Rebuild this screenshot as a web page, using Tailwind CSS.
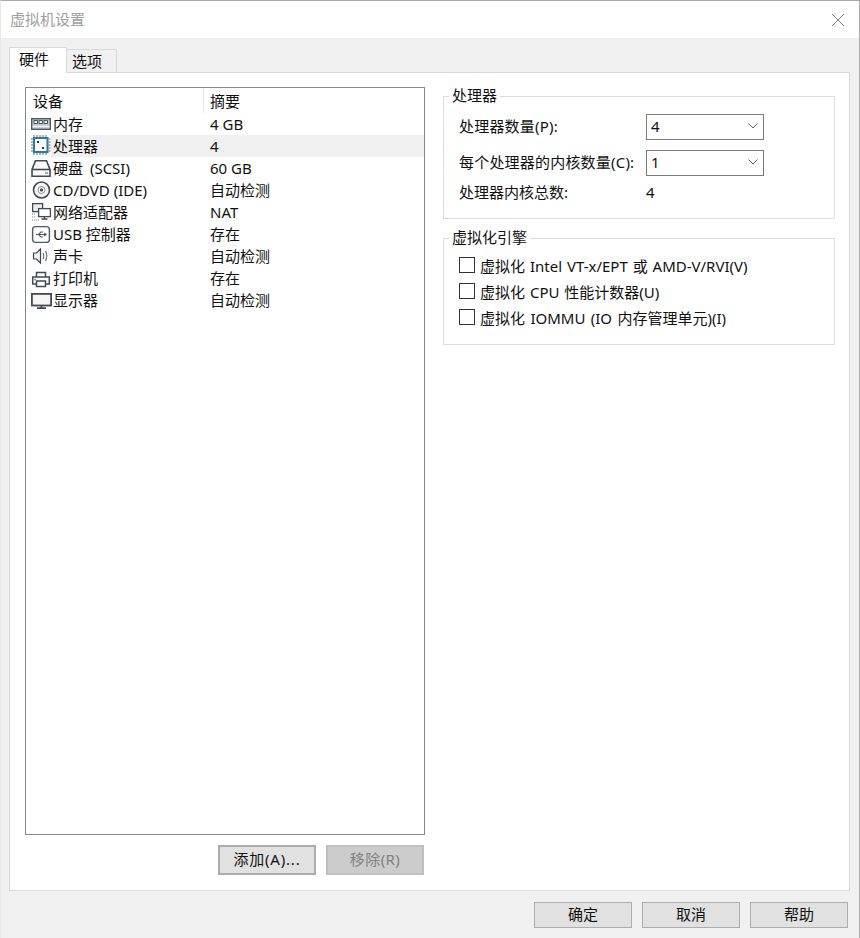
<!DOCTYPE html>
<html lang="zh-CN">
<head>
    <meta charset="UTF-8">
    <title>虚拟机设置</title>
    <script src="https://cdn.jsdelivr.net/npm/@tailwindcss/browser@4"></script>
</head>
<body class="bg-white">
<div class="w-[860px] h-[938px] flex flex-col bg-[#f0f0f0] text-[15px] leading-[22px] text-[#111] border-t border-r border-l border-[#a8a8a8] border-l-[#e8e8e8] overflow-hidden font-['Noto_Sans','Noto_Sans_CJK_SC',sans-serif]">

    <!-- Title bar -->
    <div class="h-[37px] shrink-0 bg-white flex items-center justify-between pl-[9px] pr-[15px]">
        <span class="text-[#a0a0a0] pb-[2px]">虚拟机设置</span>
        <svg class="w-[12px] h-[12px]" viewBox="0 0 12 12" fill="none" stroke="#808080" stroke-width="1"><path d="M0 0l12 12M12 0L0 12"/></svg>
    </div>

    <!-- Tabs -->
    <div class="h-[34px] shrink-0 flex items-end pl-[8px] pt-[9px]">
        <div class="w-[58px] h-[26px] bg-white border border-b-0 border-[#d9d9d9] pl-[9px] -mb-px relative z-10">硬件</div>
        <div class="w-[50px] h-[23px] bg-[#f0f0f0] border border-l-0 border-b-0 border-[#d9d9d9] pl-[5px]">选项</div>
    </div>

    <!-- Panel -->
    <div class="w-[841px] h-[819px] shrink-0 ml-[8px] bg-white border border-[#d9d9d9] flex pl-[15px] pt-[14px]">
        <div class="w-[400px] shrink-0 flex flex-col">
            <!-- Device list -->
            <div class="h-[748px] border border-[#828790] bg-white">
                <div class="flex h-[25px]">
                    <div class="w-[178px] pl-[7px] pt-[2px] border-r border-[#e5e5e5]">设备</div>
                    <div class="pl-[6px] pt-[2px]">摘要</div>
                </div>
                <div class="flex h-[22px] items-center pl-[5px] pb-[1px]">
                    <svg class="w-[22px] h-[22px] self-start shrink-0" viewBox="0 0 22 22" fill="none" stroke="#474f58" stroke-width="1.300"><rect x="0.700" y="5.700" width="18.600" height="10.600" fill="#c4c9ce"/><path d="M3 7.500h3.500v3H3zM8 7.500h3.500v3H8zM13 7.500h3.500v3H13z" fill="#f4f6f8" stroke-width="1"/><path d="M1.500 13.500h17" stroke="#f4f6f8"/></svg>
                    <span class="w-[157px]">内存</span><span>4 GB</span>
                </div>
                <div class="flex h-[22px] items-center pl-[5px]">
                    <svg class="w-[20px] h-[22px] self-start shrink-0" viewBox="0 0 20 22" fill="none"><rect x="3" y="3" width="13.500" height="14" fill="#fff" stroke="#2f78ab" stroke-width="2"/><path d="M3 0v2M6 0v2M9 0v2M12 0v2M15 0v2M3 18v2M6 18v2M9 18v2M12 18v2M15 18v2M0 4h2M0 7h2M0 10h2M0 13h2M0 16h2M17.500 4h2M17.500 7h2M17.500 10h2M17.500 13h2M17.500 16h2" stroke="#4f6f88"/><path d="M6 6h2v2H6zM11 12h2v2h-2z" fill="#2b3a48"/></svg>
                    <span class="flex-1 bg-[#f0f0f0] flex h-[22px] items-center pl-[2px] pb-[1px]"><span class="w-[157px]">处理器</span><span>4</span></span>
                </div>
                <div class="flex h-[22px] items-center pl-[5px] pb-[1px]">
                    <svg class="w-[22px] h-[22px] self-start shrink-0" viewBox="0 0 22 22" fill="none" stroke="#3f4a55" stroke-width="1.600"><path d="M4.500 3.800h11l3.500 8.700v6.700H1v-6.700z" fill="#fafafa"/><path d="M1 12.500h18"/><path d="M14 16h3" stroke="#8a949e"/></svg>
                    <span class="w-[157px] [word-spacing:3px]">硬盘 (SCSI)</span><span>60 GB</span>
                </div>
                <div class="flex h-[22px] items-center pl-[5px] pb-[1px]">
                    <svg class="w-[22px] h-[22px] self-start shrink-0" viewBox="0 0 22 22" fill="none" stroke="#3f4a55"><circle cx="10.500" cy="11" r="8" stroke-width="1.600" fill="#f5f5f5"/><circle cx="10.500" cy="11" r="3.500" stroke="#8a949e"/><circle cx="10.500" cy="11" r="1.200" fill="#4a5560"/></svg>
                    <span class="w-[157px]">CD/DVD (IDE)</span><span>自动检测</span>
                </div>
                <div class="flex h-[22px] items-center pl-[5px] pb-[1px]">
                    <svg class="w-[22px] h-[22px] self-start shrink-0" viewBox="0 0 22 22" fill="none" stroke="#3f4a55" stroke-width="1.300"><rect x="1.600" y="2.600" width="10" height="8" fill="#ececec"/><rect x="7.600" y="7.600" width="11.800" height="8" fill="#fff"/><path d="M13.500 15.500v2M10.500 18h6"/><path d="M1 13h1M3 13h1M1 16h1M3 16h1M1 19h8" stroke="#a0a8b0" stroke-dasharray="1 1"/></svg>
                    <span class="w-[157px]">网络适配器</span><span>NAT</span>
                </div>
                <div class="flex h-[22px] items-center pl-[5px] pb-[1px]">
                    <svg class="w-[22px] h-[22px] self-start shrink-0" viewBox="0 0 22 22" fill="none" stroke="#4f5a65" stroke-width="1.400"><rect x="1.600" y="3.600" width="16.800" height="15.800" rx="3"/><path d="M5 11.500h9M7.500 11.500l2.500-2.500h2M7.500 11.500l2.500 2.500h2" stroke-width="1.100"/><path d="M15.500 11.500l-2-1.500v3z" fill="#5a6470" stroke-width="0.800"/></svg>
                    <span class="w-[157px]">USB 控制器</span><span>存在</span>
                </div>
                <div class="flex h-[22px] items-center pl-[5px] pb-[1px]">
                    <svg class="w-[22px] h-[22px] self-start shrink-0" viewBox="0 0 22 22" fill="none" stroke="#3f4a55" stroke-width="1.200"><path d="M2.500 8h3l4-4v14l-4-4h-3z" fill="#f5f5f5"/><path d="M12 8q1.500 3 0 6M14.500 6q2.500 5 0 10" stroke="#6a7580"/></svg>
                    <span class="w-[157px]">声卡</span><span>自动检测</span>
                </div>
                <div class="flex h-[22px] items-center pl-[5px] pb-[1px]">
                    <svg class="w-[22px] h-[22px] self-start shrink-0" viewBox="0 0 22 22" fill="none" stroke="#3f4a55" stroke-width="1.500"><path d="M5.500 10v-4.500h9V10"/><path d="M5 17H1.700v-7h16.600v7H15"/><rect x="5.500" y="14" width="9" height="5.500" fill="#fff"/><path d="M3 12.500h2" stroke="#8a949e"/></svg>
                    <span class="w-[157px]">打印机</span><span>存在</span>
                </div>
                <div class="flex h-[22px] items-center pl-[5px] pb-[1px]">
                    <svg class="w-[22px] h-[22px] self-start shrink-0" viewBox="0 0 22 22" fill="none" stroke="#3f4a55" stroke-width="1.800"><rect x="0.900" y="4.900" width="19.200" height="11.600" fill="#f5f5f5"/><path d="M6 19.200h9M10.500 17v2" stroke-width="1.800"/></svg>
                    <span class="w-[157px]">显示器</span><span>自动检测</span>
                </div>
            </div>
            <!-- List buttons -->
            <div class="flex justify-end gap-[10px] mt-[10px] pr-[1px]">
                <div class="w-[98px] h-[30px] bg-[#e1e1e1] border-2 border-[#adadad] flex items-center justify-center pb-[2px] tracking-[0.8px]">添加(A)...</div>
                <div class="w-[98px] h-[30px] bg-[#cccccc] border-2 border-[#bfbfbf] text-[#808080] flex items-center justify-center pb-[2px] tracking-[0.4px]">移除(R)</div>
            </div>
        </div>

        <div class="w-[392px] ml-[18px] shrink-0 flex flex-col">
            <!-- Processor group -->
            <div class="relative h-[123px] mt-[9px] border border-[#dcdcdc] pt-[17px] pl-[15px]">
                <span class="absolute left-[5px] top-[-13px] bg-white px-[3px]">处理器</span>
                <div class="flex items-center h-[26px]">
                    <span class="w-[187px] pb-[2px] tracking-[0.2px]">处理器数量(P):</span>
                    <div class="w-[118px] h-[26px] border border-[#7a7a7a] flex items-center justify-between pl-[4px] pr-[5px] pb-[2px]">4<svg class="w-[10px] h-[6px]" viewBox="0 0 10 6" fill="none" stroke="#606060"><path d="M0.500 0.500L5 5l4.500-4.500"/></svg></div>
                </div>
                <div class="flex items-center h-[26px] mt-[10px]">
                    <span class="w-[187px] pb-[2px] tracking-[0.2px]">每个处理器的内核数量(C):</span>
                    <div class="w-[118px] h-[26px] border border-[#7a7a7a] flex items-center justify-between pl-[4px] pr-[5px] pb-[2px]">1<svg class="w-[10px] h-[6px]" viewBox="0 0 10 6" fill="none" stroke="#606060"><path d="M0.500 0.500L5 5l4.500-4.500"/></svg></div>
                </div>
                <div class="flex items-center h-[22px] mt-[6px] pb-[2px]">
                    <span class="w-[187px]">处理器内核总数:</span><span>4</span>
                </div>
            </div>

            <!-- Virtualization group -->
            <div class="relative h-[107px] mt-[19px] border border-[#dcdcdc] pt-[15px] pl-[15px]">
                <span class="absolute left-[5px] top-[-13px] bg-white px-[3px]">虚拟化引擎</span>
                <div class="flex items-center h-[22px] gap-[5px]"><div class="w-[16px] h-[16px] border border-[#333]"></div><span class="pt-[2px] [word-spacing:1px]">虚拟化 Intel VT-x/EPT 或 AMD-V/RVI(V)</span></div>
                <div class="flex items-center h-[22px] gap-[5px] mt-[4px]"><div class="w-[16px] h-[16px] border border-[#333]"></div><span class="pt-[2px] [word-spacing:1px]">虚拟化 CPU 性能计数器(U)</span></div>
                <div class="flex items-center h-[22px] gap-[5px] mt-[4px]"><div class="w-[16px] h-[16px] border border-[#333]"></div><span class="pt-[2px] [word-spacing:1.500px]">虚拟化 IOMMU (IO 内存管理单元)(I)</span></div>
            </div>
        </div>
    </div>

    <!-- Dialog buttons -->
    <div class="flex justify-end gap-[10px] pr-[11px] mt-[11px]">
        <div class="w-[98px] h-[26px] bg-[#e1e1e1] border border-[#adadad] flex items-center justify-center pb-[2px]">确定</div>
        <div class="w-[98px] h-[26px] bg-[#e1e1e1] border border-[#adadad] flex items-center justify-center pb-[2px]">取消</div>
        <div class="w-[98px] h-[26px] bg-[#e1e1e1] border border-[#adadad] flex items-center justify-center pb-[2px]">帮助</div>
    </div>
</div>
</body>
</html>
